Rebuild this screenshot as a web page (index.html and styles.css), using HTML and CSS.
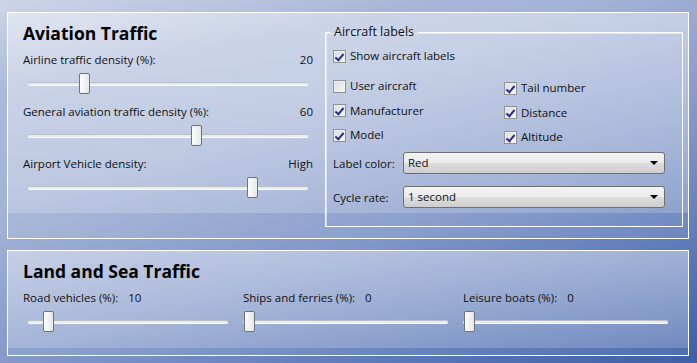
FILE: index.html
```html
<!DOCTYPE html>
<html lang="en">
<head>
  <meta charset="UTF-8">
  <title>Traffic Settings</title>
  <link rel="stylesheet" href="styles.css">
</head>
<body>
  <div class="page">
    <!-- Aviation traffic -->
    <section class="panel panel-air">
      <div class="air-cols">
        <div class="densities">
          <h1>Aviation Traffic</h1>
          <div class="setting">
            <div class="row"><span>Airline traffic density (%):</span><span>20</span></div>
            <div class="slider"><div class="track"></div><div class="thumb" style="--v: 0.19"></div></div>
          </div>
          <div class="setting">
            <div class="row"><span>General aviation traffic density (%):</span><span>60</span></div>
            <div class="slider"><div class="track"></div><div class="thumb" style="--v: 0.605"></div></div>
          </div>
          <div class="setting">
            <div class="row"><span>Airport Vehicle density:</span><span>High</span></div>
            <div class="slider"><div class="track"></div><div class="thumb" style="--v: 0.815"></div></div>
          </div>
        </div>

        <fieldset class="labels-box">
          <legend>Aircraft labels</legend>
          <label class="check"><span class="box on"></span>Show aircraft labels</label>
          <div class="check-grid">
            <div class="check-col">
              <label class="check"><span class="box"></span>User aircraft</label>
              <label class="check"><span class="box on"></span>Manufacturer</label>
              <label class="check"><span class="box on"></span>Model</label>
            </div>
            <div class="check-col right">
              <label class="check"><span class="box on"></span>Tail number</label>
              <label class="check"><span class="box on"></span>Distance</label>
              <label class="check"><span class="box on"></span>Altitude</label>
            </div>
          </div>
          <div class="combo-row">
            <span class="combo-label">Label color:</span>
            <div class="combo">Red<span class="arrow"></span></div>
          </div>
          <div class="combo-row">
            <span class="combo-label">Cycle rate:</span>
            <div class="combo">1 second<span class="arrow"></span></div>
          </div>
        </fieldset>
      </div>
    </section>

    <!-- Land and sea -->
    <section class="panel panel-land">
      <h1>Land and Sea Traffic</h1>
      <div class="land-cols">
        <div class="land-col first">
          <div class="row"><span>Road vehicles (%):</span><span>10</span></div>
          <div class="slider"><div class="track"></div><div class="thumb" style="--v: 0.08"></div></div>
        </div>
        <div class="land-col">
          <div class="row"><span>Ships and ferries (%):</span><span>0</span></div>
          <div class="slider"><div class="track"></div><div class="thumb" style="--v: 0.005"></div></div>
        </div>
        <div class="land-col">
          <div class="row"><span>Leisure boats (%):</span><span>0</span></div>
          <div class="slider"><div class="track"></div><div class="thumb" style="--v: 0.005"></div></div>
        </div>
      </div>
    </section>
  </div>
</body>
</html>
```

FILE: styles.css
```css
* { margin: 0; padding: 0; box-sizing: border-box; }
body {
  width: 697px; height: 363px; overflow: hidden;
  font-family: 'Open Sans', 'Noto Sans', sans-serif; font-size: 11.5px; color: #111;
  background:
    linear-gradient(168deg, rgba(255,255,255,0.35) 0, rgba(255,255,255,0) 18%),
    linear-gradient(160deg, #b2bedb 0%, #a3b3d6 35%, #8298c9 60%, #5574b5 85%, #3d5fa5 100%);
}
.page { display: flex; flex-direction: column; gap: 11px; padding: 12px 8px 0 7px; }
.panel {
  border: 1px solid #fff;
  background: linear-gradient(to bottom, rgba(255,255,255,0.42), rgba(255,255,255,0.25) calc(100% - var(--band)), rgba(255,255,255,0.08) calc(100% - var(--band)));
}
.panel-air { height: 227px; --band: 25px; padding: 0 15px 0 15px; }
.panel-land { height: 106px; --band: 7px; padding: 0 15px; }
h1 { font-size: 17.5px; font-weight: 700; line-height: 24px; margin-top: 8px; color: #000; }

.air-cols { display: flex; gap: 12px; }
.densities { width: 290px; flex: none; }
.setting { height: 52px; }
.setting:first-of-type { margin-top: 7px; }
.row { display: flex; justify-content: space-between; line-height: 16px; }
.slider { position: relative; height: 21px; margin: 5px 5px 0; }
.track {
  position: absolute; left: 0; right: 0; top: 9px; height: 4px; border-radius: 2px;
  background: #e9ecef; border-top: 1px solid #b9bfc8; border-bottom: 1px solid #fff;
}
.thumb {
  position: absolute; top: 0; width: 11px; height: 21px; left: calc((100% - 11px) * var(--v));
  border: 1px solid #6f747c; border-radius: 2px;
  background: linear-gradient(to right, #fdfdfd, #e4e6e9);
}

.labels-box {
  flex: none; width: 348px; margin-top: 11px; height: 203px; border: 1px solid #fff;
  box-shadow: inset 1px 1px 0 rgba(255,255,255,0.5);
  padding: 8px 7px 0 7px;
}
.labels-box legend { font-size: 12.5px; padding: 0 4px; margin-left: -3px; line-height: 16px; }
.check { display: flex; align-items: center; gap: 4px; height: 16px; line-height: 16px; }
.box {
  width: 13px; height: 13px; border: 1px solid #8f9296; flex: none;
  background: linear-gradient(135deg, #d9dce0, #f8f8f9);
  box-shadow: inset 0 0 0 1px #eef0f2;
  position: relative;
}
.box.on::after {
  content: ''; position: absolute; left: 3px; top: 1px; width: 3px; height: 7px;
  border: solid #2b2d88; border-width: 0 2px 2px 0; transform: rotate(40deg);
}
.check-grid { display: flex; margin-top: 14px; }
.check-col { display: flex; flex-direction: column; gap: 8.5px; width: 171px; }
.check-col.right { margin-top: 2px; }
.combo-row { display: flex; align-items: center; margin-top: 7px; }
.combo-row + .combo-row { margin-top: 12px; }
.combo-label { width: 70px; }
.combo {
  position: relative; flex: none; width: 262px; height: 22px; line-height: 20px; padding-left: 4px;
  border: 1px solid #707070; border-radius: 3px;
  background: linear-gradient(to bottom, #f3f3f3 0, #ebebeb 50%, #dddddd 51%, #cfcfcf 100%);
}
.arrow {
  position: absolute; right: 6px; top: 8px; width: 0; height: 0;
  border-left: 4px solid transparent; border-right: 4px solid transparent; border-top: 4px solid #000;
}

.land-cols { display: grid; grid-template-columns: 220px 220px 220px; margin-top: 7px; }
.land-col .row { justify-content: flex-start; gap: 10px; }
.land-col .slider { margin: 5px 15px 0 0; }
.land-col.first .slider { margin-left: 5px; }
```
